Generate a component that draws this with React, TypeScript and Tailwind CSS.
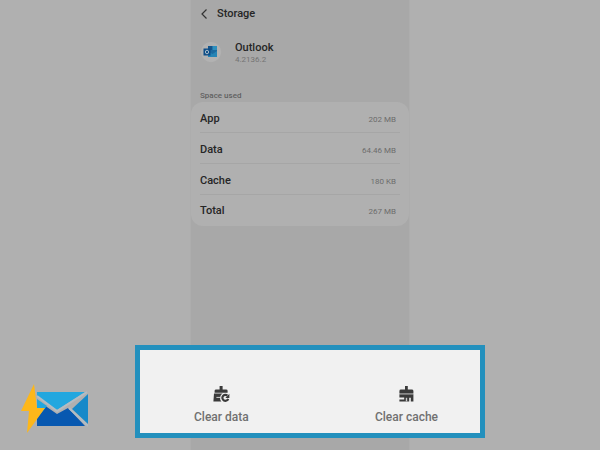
import React from "react";

interface StorageRow {
  label: string;
  value: string;
}

const rows: StorageRow[] = [
  { label: "App", value: "202 MB" },
  { label: "Data", value: "64.46 MB" },
  { label: "Cache", value: "180 KB" },
  { label: "Total", value: "267 MB" },
];

const BackIcon = () => (
  <svg viewBox="0 0 8 12" className="w-2 h-3" fill="none" stroke="#333333" strokeWidth="1.2">
    <path d="M6.5 1.5 2 6l4.5 4.5" />
  </svg>
);

const OutlookIcon = () => (
  <svg viewBox="0 0 22 22" className="w-[22px] h-[22px]">
    <circle cx="10" cy="10" r="9.7" fill="#b2b2b2" stroke="#b6b6b6" strokeWidth="0.5" />
    <path d="M7 4h9v11H7z" fill="#1b6aa0" />
    <path d="M7 4h4.5v4H7z" fill="#15558c" />
    <path d="M11.5 4H16v4h-4.5z" fill="#2f8fbd" />
    <path d="M7 9.5 11.5 12 16 9v6H7z" fill="#2584b5" />
    <path d="M2.5 6.5h7v7h-7z" fill="#0e4d86" />
    <ellipse cx="6" cy="10" rx="1.6" ry="1.8" fill="none" stroke="#a9bccb" strokeWidth="1" />
  </svg>
);

const ClearDataIcon = () => (
  <svg viewBox="0 0 18 18" className="w-[18px] h-[18px]">
    <path d="M7.6 1h3v3.4H14q1.6 0 1.6 1.4v2H2.6v-2q0-1.4 1.6-1.4h3.4z" fill="#3a3a3a" />
    <path d="M2 8.6h8.6A5 5 0 0 0 9.4 16.4H1.4z" fill="#3a3a3a" />
    <path d="M4.4 12.4h3.6" stroke="#d5d5d5" strokeWidth="1" />
    <path d="M15.4 10.6a3 3 0 1 0 .8 3.2" fill="none" stroke="#3a3a3a" strokeWidth="2.2" />
    <path d="M17.4 8.8v4.2h-4z" fill="#3a3a3a" />
  </svg>
);

const ClearCacheIcon = () => (
  <svg viewBox="0 0 18 18" className="w-[18px] h-[18px]">
    <path d="M8 1h2.8v3.6h4q1.6 0 1.6 1.4v2h-14V6q0-1.4 1.6-1.4h4z" fill="#3a3a3a" />
    <path d="M2.4 8h14v1.6h-14z" fill="#8a8a8a" />
    <path d="M2.4 9.6h14v6.8h-2.6v-3.6h-1.6v3.6H2.4v-2h4.8v-1.8H2.4z" fill="#3a3a3a" />
    <path d="M8.8 12.8h1.4v3.6H8.8z" fill="#cccccc" />
  </svg>
);

const MailLogo = () => (
  <svg viewBox="0 0 68 52" className="w-[68px] h-[52px]">
    <path d="M17 9h48L37 27 17 13z" fill="#22a7df" />
    <path d="M68 11v30L52 26z" fill="#1689c9" />
    <path d="M17 43V22h7l13 9 11-6 17 18z" fill="#0758b0" />
    <path d="M17 13l20 15L67 9M49 25l19 18" fill="none" stroke="#b3bcc3" strokeWidth="2" />
    <path d="M17 16l10 7-10 12z" fill="#22a7df" />
    <path d="M14 1 1 28h8L7 50l18-25h-8z" fill="#fdb71a" />
  </svg>
);

const App: React.FC = () => {
  return (
    <main className="relative min-h-screen bg-[#b0b0b0] flex justify-center font-['Roboto',sans-serif]">
      {/* Storage screen */}
      <section className="w-full max-w-[220px] min-h-screen bg-[#a8a8a8] border-x border-[#adadad]">
        <header className="flex items-center gap-2 h-[27px] px-2">
          <button type="button" aria-label="Back" className="px-px">
            <BackIcon />
          </button>
          <h1 className="text-[11px] leading-4 font-medium text-[#262626]">Storage</h1>
        </header>

        <div className="flex items-center gap-3 h-[51px] px-[10px]">
          <OutlookIcon />
          <div className="pt-[3px]">
            <h2 className="text-[11px] leading-3 font-medium text-[#262626]">Outlook</h2>
            <p className="text-[8px] leading-3 text-[#747474]">4.2136.2</p>
          </div>
        </div>

        <h3 className="pt-3 px-[9px] text-[8px] leading-3 font-medium text-[#606060]">Space used</h3>

        <dl className="rounded-xl bg-[#b0b0b0] px-[9px]">
          {rows.map((row) => (
            <div
              key={row.label}
              className="flex items-center justify-between h-[31px] pt-1 pr-1 border-b border-[#a6a6a6] last:border-b-0 last:pt-0"
            >
              <dt className="text-[11px] leading-4 font-medium text-[#262626]">{row.label}</dt>
              <dd className="pt-0.5 text-[8px] leading-3 text-[#6c6c6c]">{row.value}</dd>
            </div>
          ))}
        </dl>
      </section>

      {/* Logo in the corner */}
      <div className="absolute left-5 bottom-[15px]">
        <MailLogo />
      </div>

      {/* Highlighted actions over the bottom of the screen */}
      <div className="absolute inset-x-0 bottom-3 flex justify-center pl-5">
        <div className="w-full max-w-[350px] h-[93px] flex items-end justify-between border-[5px] border-[#2390bd] bg-[#f1f1f1] pl-[54px] pr-[42px] pb-2">
          <button type="button" className="flex flex-col items-center gap-1.5 text-xs leading-4 font-medium text-[#707070]">
            <ClearDataIcon />
            Clear data
          </button>
          <button type="button" className="flex flex-col items-center gap-1.5 text-xs leading-4 font-medium text-[#707070]">
            <ClearCacheIcon />
            Clear cache
          </button>
        </div>
      </div>
    </main>
  );
};

export default App;
